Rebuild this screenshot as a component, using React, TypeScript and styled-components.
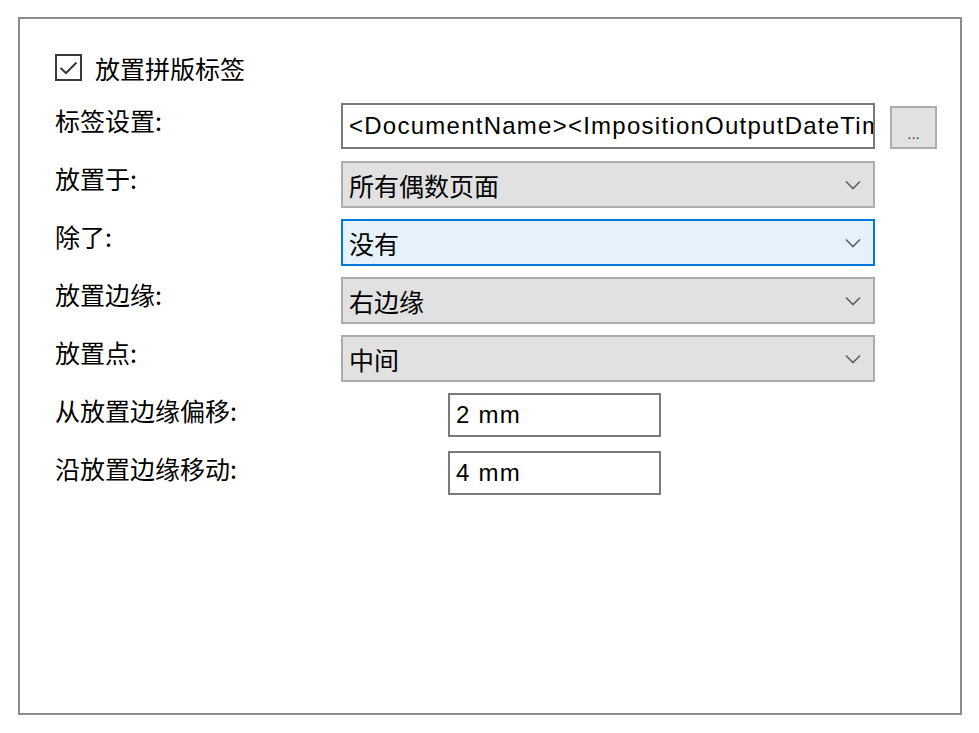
import React from "react";
import styled, { createGlobalStyle } from "styled-components";

const Global = createGlobalStyle`
  html, body { margin: 0; padding: 0; background: #ffffff; }
  body { font-family: "Noto Sans CJK SC", "Liberation Sans", sans-serif; }
`;

const Panel = styled.div`
  box-sizing: border-box;
  margin: 17px 0 0 18px;
  width: 944px;
  height: 698px;
  border: 2px solid #8c8c8c;
  padding: 35px 0 0 35px;
  display: flex;
  flex-direction: column;
`;

const CheckRow = styled.label`
  display: flex;
  align-items: center;
  gap: 13px;
  height: 27px;
  margin-bottom: 22px;
  font-family: "Noto Sans CJK SC", sans-serif;
  font-size: 25px;
  color: #000;
`;

const CheckBox = styled.span`
  box-sizing: border-box;
  width: 27px;
  height: 27px;
  border: 2px solid #3a3a3a;
  background: #fff;
  display: flex;
  align-items: center;
  justify-content: center;
`;

const Rows = styled.div`
  display: flex;
  flex-direction: column;
  gap: 11px;
`;

const Row = styled.div`
  display: flex;
  align-items: flex-start;
  height: 47px;
`;

const Label = styled.div<{ $w: number }>`
  width: ${(p) => p.$w}px;
  flex: none;
  padding-top: 2px;
  font-family: "Noto Sans CJK SC", sans-serif;
  font-size: 25px;
  line-height: 30px;
  color: #000;
`;

const TextBox = styled.div<{ $w: number; $h: number }>`
  box-sizing: border-box;
  width: ${(p) => p.$w}px;
  height: ${(p) => p.$h}px;
  border: 2px solid #7a7a7a;
  background: #fff;
  padding-left: 6px;
  display: flex;
  align-items: center;
  overflow: hidden;
  white-space: nowrap;
  font-family: "Liberation Sans", Arial, sans-serif;
  font-size: 24px;
  letter-spacing: 1.25px;
  color: #000;
`;

const Combo = styled.div<{ $focus?: boolean }>`
  box-sizing: border-box;
  width: 534px;
  height: 47px;
  border: 2px solid ${(p) => (p.$focus ? "#0078d7" : "#adadad")};
  background: ${(p) => (p.$focus ? "#e5f1fb" : "#e1e1e1")};
  padding: 0 12px 0 6px;
  display: flex;
  align-items: center;
  justify-content: space-between;
  font-family: "Noto Sans CJK SC", sans-serif;
  font-size: 25px;
  color: #000;
`;

const DotsButton = styled.div`
  box-sizing: border-box;
  width: 47px;
  height: 43px;
  margin: 3px 0 0 15px;
  border: 2px solid #adadad;
  background: #e1e1e1;
  display: flex;
  align-items: flex-end;
  justify-content: center;
  padding-bottom: 6px;
  font-family: "Liberation Sans", Arial, sans-serif;
  font-size: 15px;
  line-height: 15px;
  color: #333;
`;

const Chevron = () => (
  <svg width="16" height="10" viewBox="0 0 16 10">
    <path d="M1 1.5 L8 8.5 L15 1.5" fill="none" stroke="#606060" strokeWidth="1.6" />
  </svg>
);

const Check = () => (
  <svg width="19" height="14" viewBox="0 0 19 14">
    <path d="M1.5 7 L7 12 L17.5 1.5" fill="none" stroke="#3a3a3a" strokeWidth="2" />
  </svg>
);

export default function App() {
  return (
    <>
      <Global />
      <Panel>
        <CheckRow>
          <CheckBox>
            <Check />
          </CheckBox>
          放置拼版标签
        </CheckRow>
        <Rows>
          <Row>
            <Label $w={286}>标签设置:</Label>
            <TextBox $w={534} $h={46}>
              &lt;DocumentName&gt;&lt;ImpositionOutputDateTime&gt;
            </TextBox>
            <DotsButton>...</DotsButton>
          </Row>
          <Row>
            <Label $w={286}>放置于:</Label>
            <Combo>
              所有偶数页面
              <Chevron />
            </Combo>
          </Row>
          <Row>
            <Label $w={286}>除了:</Label>
            <Combo $focus>
              没有
              <Chevron />
            </Combo>
          </Row>
          <Row>
            <Label $w={286}>放置边缘:</Label>
            <Combo>
              右边缘
              <Chevron />
            </Combo>
          </Row>
          <Row>
            <Label $w={286}>放置点:</Label>
            <Combo>
              中间
              <Chevron />
            </Combo>
          </Row>
          <Row>
            <Label $w={393}>从放置边缘偏移:</Label>
            <TextBox $w={213} $h={44}>2 mm</TextBox>
          </Row>
          <Row>
            <Label $w={393}>沿放置边缘移动:</Label>
            <TextBox $w={213} $h={44}>4 mm</TextBox>
          </Row>
        </Rows>
      </Panel>
    </>
  );
}
